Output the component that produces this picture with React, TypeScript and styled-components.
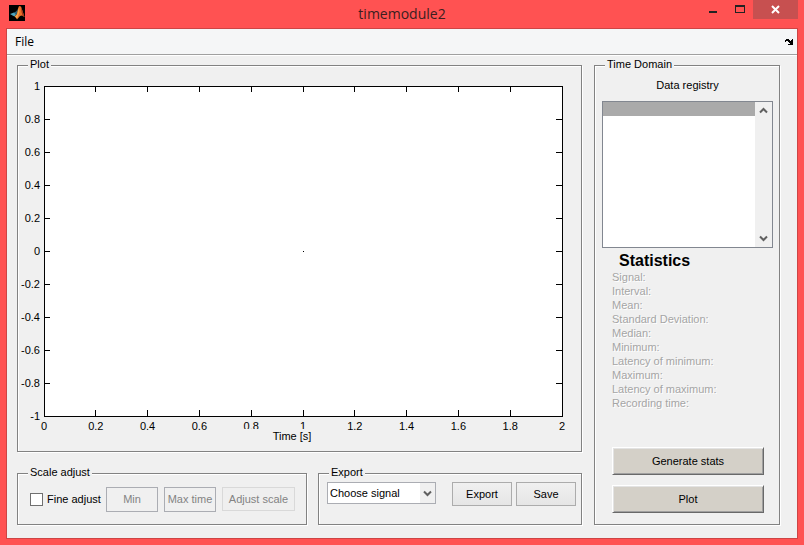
import React from "react";
import styled, { createGlobalStyle, css } from "styled-components";

const GlobalStyle = createGlobalStyle`
  * { box-sizing: border-box; }
  body { margin: 0; font: 11px/14px "Liberation Sans", Arial, sans-serif; color: #000; }
  button, input, select { font: inherit; color: inherit; margin: 0; }
`;

const Window = styled.div`
  min-height: 100vh;
  display: flex;
  flex-direction: column;
  padding: 0 6px 6px;
  background: #ff5252;
`;

const TitleBar = styled.header`
  height: 28px;
  display: grid;
  grid-template-columns: 1fr auto 1fr;
`;

const AppIcon = styled.svg`
  width: 16px;
  height: 16px;
  margin: 5px 3px;
`;

const Title = styled.h1`
  margin: 0;
  font: 14px/28px "Open Sans", "Segoe UI", sans-serif;
  color: #3a2020;
`;

const WindowButtons = styled.div`
  display: flex;
  justify-content: flex-end;
  align-items: flex-start;
`;

const WindowButton = styled.button<{ $close?: boolean }>`
  width: ${(p) => (p.$close ? 45 : 27)}px;
  height: 19px;
  padding: 0;
  border: 0;
  background: ${(p) => (p.$close ? "#c75050" : "transparent")};
  svg { display: block; margin: 0 auto; }
`;

const Client = styled.main`
  flex: 1;
  display: flex;
  flex-direction: column;
  border: 1px solid #cd4545;
  background: #f0f0f0;
`;

const MenuBar = styled.nav`
  height: 26px;
  display: flex;
  justify-content: space-between;
  align-items: center;
  padding: 0 4px 0 8px;
  background: #f5f6f7;
  border-bottom: 1px solid #a0a0a0;
  box-shadow: 0 1px 0 #fff;
`;

const MenuItem = styled.button`
  padding: 0;
  border: 0;
  background: none;
  font: 12px/24px "Open Sans", "Segoe UI", sans-serif;
`;

const DockButton = styled.button`
  padding: 0;
  border: 0;
  background: none;
  svg { display: block; }
`;

const Content = styled.div`
  flex: 1;
  display: grid;
  grid-template-columns: minmax(0, 1fr) 186px;
  gap: 12px;
  padding: 4px 17px 13px 10px;
`;

const LeftColumn = styled.div`
  display: flex;
  flex-direction: column;
  gap: 15px;
`;

const Panel = styled.fieldset`
  min-width: 0;
  margin: 0;
  padding: 0;
  border: 1px solid #828282;
  box-shadow: 1px 1px 0 #fff, inset 1px 1px 0 #fff;
`;

const PanelTitle = styled.legend`
  margin-left: 10px;
  padding: 0 2px 2px;
  line-height: 11px;
  background: #f0f0f0;
`;

const PlotPanel = styled(Panel)`
  flex: 1;
  display: flex;
`;

const PlotBody = styled.div`
  height: 100%;
  flex: 1;
  display: flex;
  flex-direction: column;
  padding: 14px 19px 8px 26px;
`;

const Axes = styled.svg`
  flex: 1;
  width: 100%;
  min-height: 330px;
  overflow: visible;
  text { font: 11px "Liberation Sans", Arial, sans-serif; }
  line, rect { stroke: #000; shape-rendering: crispEdges; }
`;

const AxisTitle = styled.div`
  position: relative;
  align-self: center;
  width: 100px;
  margin: 13px 22px 0 0;
  text-align: center;
  background: #f0f0f0;
`;

const BottomRow = styled.div`
  display: grid;
  grid-template-columns: 290fr 264fr;
  gap: 11px;
`;

const ScaleBody = styled.div`
  height: 44px;
  display: flex;
  align-items: center;
  gap: 6px;
  padding: 0 11px 6px 12px;
`;

const CheckLabel = styled.label`
  flex: 1;
  display: flex;
  align-items: center;
  gap: 4px;
  white-space: nowrap;
  min-width: 0;
`;

const CheckBox = styled.input`
  appearance: none;
  flex: none;
  width: 13px;
  height: 13px;
  border: 1px solid #707070;
  background: #fff;
  &:checked { background: #707070; }
`;

const ScaleInput = styled.input`
  width: 52px;
  height: 25px;
  padding: 0;
  border: 1px solid #abadb3;
  text-align: center;
  background: #f0f0f0;
  &::placeholder { color: #838383; opacity: 1; }
`;

const buttonSize = css`
  height: 24px;
  padding: 0;
`;

const PushButton = styled.button`
  ${buttonSize}
  width: 60px;
  border: 1px solid #acacac;
  background: linear-gradient(#f0f0f0, #e5e5e5);
`;

const DisabledButton = styled.button`
  ${buttonSize}
  width: 73px;
  border: 1px solid #d9d9d9;
  background: #efefef;
  color: #838383;
`;

const ExportBody = styled.div`
  display: flex;
  gap: 4px;
  padding: 2px 5px 0 8px;
`;

const SelectBox = styled.div`
  position: relative;
  width: 109px;
  margin-right: auto;
  svg { position: absolute; right: 1px; top: 1px; pointer-events: none; }
`;

const SignalSelect = styled.select`
  appearance: none;
  width: 100%;
  height: 22px;
  padding: 0 18px 0 2px;
  border: 1px solid #abadb3;
  border-radius: 0;
  background: #fff;
`;

const DomainPanel = styled(Panel)`
  display: flex;
`;

const DomainBody = styled.div`
  height: 100%;
  flex: 1;
  display: flex;
  flex-direction: column;
  padding: 6px 6px 11px 7px;
`;

const ListTitle = styled.div`
  margin-bottom: 9px;
  text-align: center;
`;

const ListBox = styled.div`
  height: 147px;
  display: grid;
  grid-template-columns: 1fr 17px;
  border: 1px solid #828790;
  background: #fff;
`;

const List = styled.ul`
  margin: 0;
  padding: 0;
  list-style: none;
`;

const ListItem = styled.li`
  height: 14px;
  background: #aaa;
`;

const ScrollBar = styled.div`
  display: flex;
  flex-direction: column;
  justify-content: space-between;
  background: #f0f0f0;
`;

const ScrollButton = styled.button`
  height: 17px;
  padding: 0;
  border: 0;
  background: none;
  svg { display: block; margin: 0 auto; }
`;

const StatsTitle = styled.h2`
  margin: 3px 0 0 17px;
  font-size: 16px;
  line-height: 19px;
`;

const StatsList = styled.ul`
  margin: 0 0 auto 10px;
  padding: 0;
  list-style: none;
  color: #a5a5a5;
  text-shadow: 1px 1px 0 #fff;
`;

const ActionButtons = styled.div`
  display: flex;
  flex-direction: column;
  gap: 10px;
  padding: 0 9px 0 10px;
`;

const ActionButton = styled.button`
  height: 28px;
  padding: 0;
  border: 1px solid;
  border-color: #fff #696969 #696969 #fff;
  box-shadow: inset 1px 1px 0 #e3e3e3, inset -1px -1px 0 #a0a0a0;
  background: #d4d0c8;
`;

const xTicks = ["0", "0.2", "0.4", "0.6", "0.8", "1", "1.2", "1.4", "1.6", "1.8", "2"];
const yTicks = ["1", "0.8", "0.6", "0.4", "0.2", "0", "-0.2", "-0.4", "-0.6", "-0.8", "-1"];
const stats = [
  "Signal:", "Interval:", "Mean:", "Standard Deviation:", "Median:", "Minimum:",
  "Latency of minimum:", "Maximum:", "Latency of maximum:", "Recording time:",
];

function Plot() {
  return (
    <Axes role="img" aria-label="Empty plot over time">
      <rect width="100%" height="100%" fill="#fff" />
      {xTicks.map((t, i) => (
        <React.Fragment key={t}>
          <line x1={`${i * 10}%`} x2={`${i * 10}%`} y1="0" y2="6" />
          <svg y="100%" overflow="visible">
            <line x1={`${i * 10}%`} x2={`${i * 10}%`} y1="-6" y2="0" />
            <text x={`${i * 10}%`} y="14" textAnchor="middle">{t}</text>
          </svg>
        </React.Fragment>
      ))}
      {yTicks.map((t, i) => (
        <React.Fragment key={t}>
          <line y1={`${i * 10}%`} y2={`${i * 10}%`} x1="0" x2="6" />
          <svg x="100%" overflow="visible">
            <line y1={`${i * 10}%`} y2={`${i * 10}%`} x1="-6" x2="0" />
          </svg>
          <text x="-4" y={`${i * 10}%`} dy="4" textAnchor="end">{t}</text>
        </React.Fragment>
      ))}
      <svg x="50%" y="50%" overflow="visible">
        <path d="M0 0h1v1H0z" shapeRendering="crispEdges" />
      </svg>
    </Axes>
  );
}

function Chevron({ up }: { up?: boolean }) {
  return (
    <svg width="9" height="7" viewBox="0 0 9 7" fill="none" stroke="#606060" strokeWidth="2">
      <path d={up ? "M1 5.5 4.5 2 8 5.5" : "M1 1.5 4.5 5 8 1.5"} />
    </svg>
  );
}

export default function App() {
  return (
    <Window>
      <GlobalStyle />
      <TitleBar>
        <AppIcon viewBox="0 0 16 16" aria-hidden="true">
          <rect width="16" height="16" fill="#000" />
          <path d="M1 9 5 7.5 7.5 9 5.5 11.5 3.5 10.5Z" fill="#4fa6bd" />
          <path d="M5 7.5 7 6.5 9 4 8.5 8 7 10Z" fill="#2c6478" />
          <path d="M10 1 12 1.5 13.5 6 15.5 12 13 10.5 11 11 8 14.5 7 12.5 5.5 11.5 8 9 9 4Z" fill="#ea6f2a" />
          <path d="M10 2 10.5 7 8.5 12.5 7.5 13.5 6 11.5 8 9.5Z" fill="#f5a648" />
          <path d="M12 2 13.5 6 15.5 12 13.5 10.5 12.5 7Z" fill="#a3341c" />
        </AppIcon>
        <Title>timemodule2</Title>
        <WindowButtons>
          <WindowButton aria-label="Minimize">
            <svg width="8" height="19"><path d="M0 11h8v2H0z" fill="#222" /></svg>
          </WindowButton>
          <WindowButton aria-label="Maximize">
            <svg width="10" height="19"><path d="M0 5h10v8H0zM1 7v5h8V7z" fill="#222" fillRule="evenodd" /></svg>
          </WindowButton>
          <WindowButton $close aria-label="Close">
            <svg width="9" height="19"><path d="M1 6l7 7M8 6l-7 7" stroke="#fff" strokeWidth="2" /></svg>
          </WindowButton>
        </WindowButtons>
      </TitleBar>
      <Client>
        <MenuBar>
          <MenuItem>File</MenuItem>
          <DockButton aria-label="Dock figure">
            <svg width="8" height="6" shapeRendering="crispEdges">
              <path d="M1 0h3v1h1v1h1V1h1V0h1v6H3V5h2V4H4V3H3V2H1v1H0V1h1z" />
            </svg>
          </DockButton>
        </MenuBar>
        <Content>
          <LeftColumn>
            <PlotPanel>
              <PanelTitle>Plot</PanelTitle>
              <PlotBody>
                <Plot />
                <AxisTitle>Time [s]</AxisTitle>
              </PlotBody>
            </PlotPanel>
            <BottomRow>
              <Panel>
                <PanelTitle>Scale adjust</PanelTitle>
                <ScaleBody>
                  <CheckLabel><CheckBox type="checkbox" />Fine adjust</CheckLabel>
                  <ScaleInput disabled placeholder="Min" aria-label="Min" />
                  <ScaleInput disabled placeholder="Max time" aria-label="Max time" />
                  <DisabledButton disabled>Adjust scale</DisabledButton>
                </ScaleBody>
              </Panel>
              <Panel>
                <PanelTitle>Export</PanelTitle>
                <ExportBody>
                  <SelectBox>
                    <SignalSelect aria-label="Signal to export"><option>Choose signal</option></SignalSelect>
                    <svg width="15" height="20" aria-hidden="true">
                      <rect width="15" height="20" fill="#f0f0f0" />
                      <path d="M4 8.5 7.5 12 11 8.5" fill="none" stroke="#606060" strokeWidth="2" />
                    </svg>
                  </SelectBox>
                  <PushButton>Export</PushButton>
                  <PushButton>Save</PushButton>
                </ExportBody>
              </Panel>
            </BottomRow>
          </LeftColumn>
          <DomainPanel>
            <PanelTitle>Time Domain</PanelTitle>
            <DomainBody>
              <ListTitle id="registry">Data registry</ListTitle>
              <ListBox>
                <List role="listbox" aria-labelledby="registry">
                  <ListItem role="option" aria-selected="true" />
                </List>
                <ScrollBar>
                  <ScrollButton aria-label="Scroll up"><Chevron up /></ScrollButton>
                  <ScrollButton aria-label="Scroll down"><Chevron /></ScrollButton>
                </ScrollBar>
              </ListBox>
              <StatsTitle>Statistics</StatsTitle>
              <StatsList>
                {stats.map((s) => <li key={s}>{s}</li>)}
              </StatsList>
              <ActionButtons>
                <ActionButton>Generate stats</ActionButton>
                <ActionButton>Plot</ActionButton>
              </ActionButtons>
            </DomainBody>
          </DomainPanel>
        </Content>
      </Client>
    </Window>
  );
}
